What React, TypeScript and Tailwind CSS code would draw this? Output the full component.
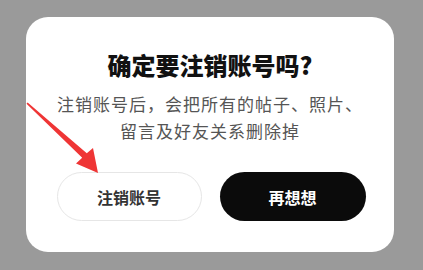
import React from "react";

const font = { fontFamily: '"Noto Sans CJK SC", "Noto Sans", sans-serif' };

// red pointer arrow drawn over the dialog
const Arrow: React.FC = () => (
  <svg
    className="pointer-events-none absolute left-0 top-0"
    width="423"
    height="270"
    viewBox="0 0 423 270"
  >
    <polygon
      points="26.5,103.8 27.6,102.4 86.8,153.2 93,148 98,173 76,163.5 82.2,157.8"
      fill="#ef3535"
    />
  </svg>
);

export default function App() {
  return (
    <div
      className="relative flex h-[270px] w-[423px] items-start bg-[#9a9a9a] pl-[26px] pt-[17px]"
      style={font}
    >
      <div className="flex w-[368px] flex-col items-center rounded-[22px] bg-white pb-[31px] pt-[33px]">
        <h2 className="text-[24px] font-black leading-[30px] text-[#111]">确定要注销账号吗?</h2>
        <p className="mt-[10px] text-center text-[17px] leading-[27px] tracking-[1px] text-[#555]">
          注销账号后，会把所有的帖子、照片、
          <br />
          留言及好友关系删除掉
        </p>
        <div className="mt-[28px] flex gap-[18px] pl-[2px]">
          <button className="h-[49px] w-[145px] rounded-full border border-[#e6e6e6] bg-white text-[16px] font-bold text-[#333]">
            注销账号
          </button>
          <button className="h-[49px] w-[146px] rounded-full bg-[#0b0b0b] text-[16px] font-bold text-white">
            再想想
          </button>
        </div>
      </div>
      <Arrow />
    </div>
  );
}
